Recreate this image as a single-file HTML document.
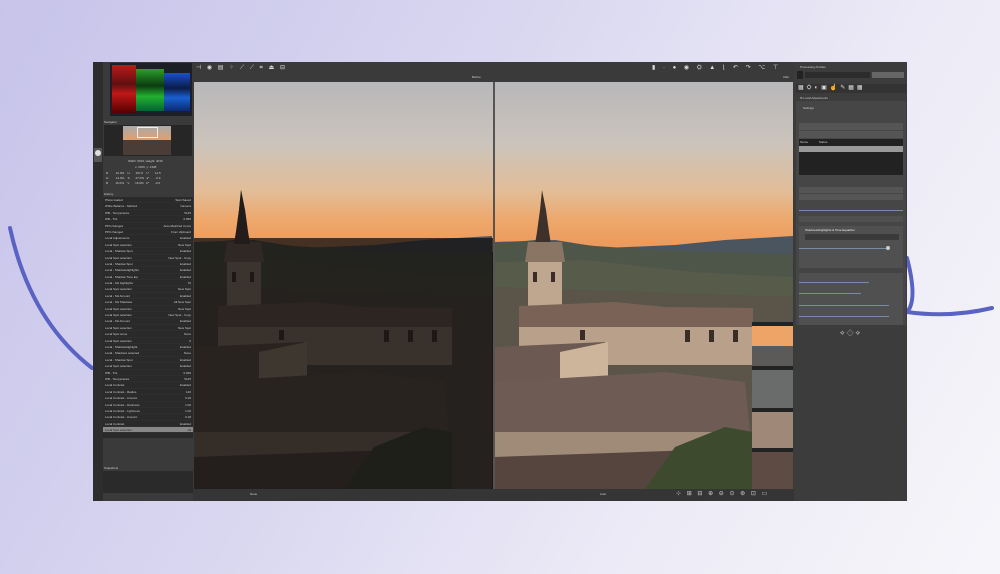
<!DOCTYPE html>
<html><head><meta charset="utf-8"><style>
*{margin:0;padding:0;box-sizing:border-box}
body{width:1000px;height:574px;overflow:hidden;position:relative;font-family:"Liberation Sans",sans-serif;
background:linear-gradient(120deg,#c7c3ea 0%,#d9d7f0 40%,#eceaf6 70%,#f6f6fa 100%)}
.abs{position:absolute}
.win{left:93px;top:62px;width:814px;height:439px;background:#3a3a3a}
.t{font-size:3px;color:#cfcfcf;white-space:nowrap}
.row{height:6.4px;border-bottom:1px solid #2e2e2e;display:flex;justify-content:space-between;padding:0 2px;font-size:3px;color:#ccc;line-height:6px}
.sky{position:absolute;left:0;top:0;width:100%;height:170px;background:linear-gradient(#b8b7ba 0%,#cbc4bc 36%,#e2bd98 64%,#eea76a 82%,#ec965a 100%)}
</style></head><body>
<svg class="abs" style="left:0;top:0" width="1000" height="574">
<path d="M10 228 Q30 320 92 368" stroke="#5a62c4" stroke-width="4" fill="none" stroke-linecap="round"/>
<path d="M907 258 Q918 300 907 312 Q950 318 992 308" stroke="#5a62c4" stroke-width="4" fill="none" stroke-linecap="round"/>
</svg>
<div class="abs win"></div>
<div class="abs" style="left:93px;top:62px;width:10px;height:439px;background:#2d2d2d"></div>
<div class="abs" style="left:94px;top:148px;width:8px;height:14px;background:#555"></div>
<div class="abs" style="left:95px;top:150px;width:6px;height:6px;border-radius:50%;background:#ddd"></div>
<div class="abs" style="left:110px;top:63px;width:82px;height:53px;background:#1d1f26;overflow:hidden">
<div class="abs" style="left:2px;top:2px;width:24px;height:48px;background:linear-gradient(#c0181a,#601010 40%,#c01818 60%,#500)"></div>
<div class="abs" style="left:26px;top:6px;width:28px;height:42px;background:linear-gradient(#2aa02a,#0c3a10 40%,#22b030 65%,#063)"></div>
<div class="abs" style="left:54px;top:10px;width:26px;height:38px;background:linear-gradient(#1a50c8,#0a1c48 40%,#1a60d0 65%,#0a2a70)"></div>
</div>
<div class="abs t" style="left:104px;top:120px">Navigator</div>
<div class="abs" style="left:104px;top:125px;width:88px;height:31px;background:#262626"></div>
<div class="abs" style="left:123px;top:126px;width:48px;height:14px;background:linear-gradient(#aaa,#e0a070)"></div>
<div class="abs" style="left:123px;top:140px;width:48px;height:15px;background:#4a3c36"></div>
<div class="abs" style="left:137px;top:127px;width:21px;height:11px;border:1px solid #eee"></div>
<div class="abs t" style="left:128px;top:159px">Width: 6016, Height: 4016</div>
<div class="abs t" style="left:135px;top:165px">x: 3015, y: 1338</div>
<div class="abs t" style="left:106px;top:171px;line-height:5px">R &nbsp;&nbsp;&nbsp;&nbsp;&nbsp;&nbsp;&nbsp;&nbsp;10.0% &nbsp;&nbsp;&nbsp;H &nbsp;&nbsp;&nbsp;&nbsp;&nbsp;&nbsp;167.6 &nbsp;&nbsp;&nbsp;L* &nbsp;&nbsp;&nbsp;&nbsp;&nbsp;&nbsp;11.5<br>G &nbsp;&nbsp;&nbsp;&nbsp;&nbsp;&nbsp;&nbsp;&nbsp;14.0% &nbsp;&nbsp;&nbsp;S &nbsp;&nbsp;&nbsp;&nbsp;&nbsp;&nbsp;27.0% &nbsp;&nbsp;a* &nbsp;&nbsp;&nbsp;&nbsp;&nbsp;&nbsp;-0.9<br>B &nbsp;&nbsp;&nbsp;&nbsp;&nbsp;&nbsp;&nbsp;&nbsp;16.0% &nbsp;&nbsp;&nbsp;V &nbsp;&nbsp;&nbsp;&nbsp;&nbsp;&nbsp;16.0% &nbsp;&nbsp;b* &nbsp;&nbsp;&nbsp;&nbsp;&nbsp;&nbsp;-3.6</div>
<div class="abs t" style="left:104px;top:192px">History</div>
<div class="abs" style="left:103px;top:197px;width:90px;height:241px;background:#2a2a2a">
<div class="row"><span>Photo loaded</span><span>Start Saved</span></div>
<div class="row"><span>White Balance - Method</span><span>Camera</span></div>
<div class="row"><span>WB - Temperature</span><span>5145</span></div>
<div class="row"><span>WB - Tint</span><span>0.950</span></div>
<div class="row"><span>PP3 changed</span><span>Auto-Matched Curve</span></div>
<div class="row"><span>PP3 changed</span><span>From clipboard</span></div>
<div class="row"><span>Local Adjustments</span><span>Enabled</span></div>
<div class="row"><span>Local Spot selection</span><span>New Spot</span></div>
<div class="row"><span>Local - Shadow Spot</span><span>Enabled</span></div>
<div class="row"><span>Local Spot selection</span><span>New Spot - Copy</span></div>
<div class="row"><span>Local - Shadow Spot</span><span>Enabled</span></div>
<div class="row"><span>Local - ShadowHighlights</span><span>Enabled</span></div>
<div class="row"><span>Local - Shadow Tone Eq.</span><span>Enabled</span></div>
<div class="row"><span>Local - SH Highlights</span><span>70</span></div>
<div class="row"><span>Local Spot selection</span><span>New Spot</span></div>
<div class="row"><span>Local - SH Amount</span><span>Enabled</span></div>
<div class="row"><span>Local - SH Shadows</span><span>All New Spot</span></div>
<div class="row"><span>Local Spot selection</span><span>New Spot</span></div>
<div class="row"><span>Local Spot selection</span><span>New Spot - Copy</span></div>
<div class="row"><span>Local - SH Amount</span><span>Enabled</span></div>
<div class="row"><span>Local Spot selection</span><span>New Spot</span></div>
<div class="row"><span>Local Spot curve</span><span>None</span></div>
<div class="row"><span>Local Spot selection</span><span>0</span></div>
<div class="row"><span>Local - ShadowHighlight</span><span>Enabled</span></div>
<div class="row"><span>Local - Shadows selected</span><span>None</span></div>
<div class="row"><span>Local - Shadow Spot</span><span>Enabled</span></div>
<div class="row"><span>Local Spot selection</span><span>Enabled</span></div>
<div class="row"><span>WB - Tint</span><span>0.930</span></div>
<div class="row"><span>WB - Temperature</span><span>5145</span></div>
<div class="row"><span>Local Contrast</span><span>Enabled</span></div>
<div class="row"><span>Local Contrast - Radius</span><span>120</span></div>
<div class="row"><span>Local Contrast - Amount</span><span>0.20</span></div>
<div class="row"><span>Local Contrast - Darkness</span><span>1.00</span></div>
<div class="row"><span>Local Contrast - Lightness</span><span>1.00</span></div>
<div class="row"><span>Local Contrast - Amount</span><span>0.18</span></div>
<div class="row"><span>Local Contrast</span><span>Enabled</span></div>
<div class="row" style="background:#888;color:#222"><span>Local Spot selection</span><span>All</span></div>
</div>
<div class="abs t" style="left:104px;top:466px">Snapshots</div>
<div class="abs" style="left:103px;top:471px;width:90px;height:22px;background:#2a2a2a"></div>
<div class="abs" style="left:193px;top:62px;width:601px;height:20px;background:#3a3a3a"></div>
<div class="abs t" style="left:196px;top:64px;font-size:6px;color:#ddd;letter-spacing:2px">⊣ ◉ ▤ ⁘ ⟋ ⟋ ⌗ ⏏ ⊟</div>
<div class="abs t" style="left:652px;top:64px;font-size:6px;color:#ddd;letter-spacing:3px">▮ · ● ◉ ⛭ ▲ ⌊ ↶ ↷ ⌥ ⊤</div>
<div class="abs t" style="left:472px;top:75px">Before</div>
<div class="abs t" style="left:783px;top:75px">After</div>

<svg width="0" height="0" style="position:absolute">
<defs>
<g id="town">
<path d="M0 160 L60 158 L110 166 L180 163 L230 158 L298 154 L298 407 L0 407Z" fill="#4a5560"/>
<path d="M0 162 L40 158 L100 164 L160 168 L298 172 L298 407 L0 407Z" fill="#4d5649"/>
<path d="M0 180 L90 178 L200 190 L298 195 L298 407 L0 407Z" fill="#565b4a"/>
<path d="M0 205 L298 215 L298 407 L0 407Z" fill="#5b5448"/>
<path d="M47 108 L45 128 L42 150 L40 162 L56 162 L54 150 L51 128Z" fill="#3e302b"/>
<path d="M33 160 L67 160 L70 180 L30 180Z" fill="#8a7464"/>
<rect x="33" y="180" width="34" height="50" fill="#bfa68e"/>
<rect x="38" y="190" width="4" height="10" fill="#3a2c26"/><rect x="56" y="190" width="4" height="10" fill="#3a2c26"/>
<path d="M24 224 L120 220 L170 225 L258 226 L258 245 L24 247Z" fill="#7a6356"/>
<rect x="24" y="245" width="234" height="38" fill="#b8a08a"/>
<rect x="85" y="248" width="5" height="10" fill="#3a2c26"/><rect x="190" y="248" width="5" height="12" fill="#3a2c26"/><rect x="214" y="248" width="5" height="12" fill="#3a2c26"/><rect x="238" y="248" width="5" height="12" fill="#3a2c26"/>
<path d="M0 265 L110 260 L113 298 L0 300Z" fill="#6c5a52"/>
<path d="M65 270 L113 260 L113 298 L65 300Z" fill="#cdb59c"/>
<path d="M0 300 L170 290 L250 300 L255 350 L0 360Z" fill="#6e5c54"/>
<rect x="0" y="350" width="250" height="28" fill="#a08a78"/>
<path d="M0 375 L200 368 L258 378 L258 407 L0 407Z" fill="#56453f"/>
<path d="M150 407 L180 365 L230 345 L258 350 L258 407Z" fill="#3e4a2e"/>
</g>
</defs>
</svg>

<div class="abs" style="left:194px;top:82px;width:299px;height:407px;overflow:hidden;background:#2a2624">
<div class="sky"></div>
<svg class="abs" style="left:0;top:0" width="299" height="407"><use href="#town"/></svg>
<div class="abs" style="left:0;top:156px;width:299px;height:251px;background:rgba(22,19,18,0.78)"></div>
<svg class="abs" style="left:0;top:0" width="299" height="170"><path d="M47 108 L45 128 L42 150 L40 162 L56 162 L54 150 L51 128Z" fill="#221c1a"/></svg>
</div>
<div class="abs" style="left:493px;top:82px;width:2px;height:407px;background:#555"></div>
<div class="abs" style="left:495px;top:82px;width:298px;height:407px;overflow:hidden;background:#5b5448">
<div class="sky"></div>
<svg class="abs" style="left:0;top:0" width="298" height="407"><use href="#town"/></svg>
<div class="abs" style="left:257px;top:240px;width:41px;height:167px;background:#6a5a50"></div>
<div class="abs" style="left:257px;top:240px;width:41px;height:4px;background:#222"></div>
<div class="abs" style="left:257px;top:244px;width:41px;height:20px;background:#eea466"></div>
<div class="abs" style="left:257px;top:264px;width:41px;height:20px;background:#5b5a58"></div>
<div class="abs" style="left:257px;top:284px;width:41px;height:4px;background:#222"></div>
<div class="abs" style="left:257px;top:288px;width:41px;height:38px;background:#6a6c6c"></div>
<div class="abs" style="left:257px;top:326px;width:41px;height:4px;background:#222"></div>
<div class="abs" style="left:257px;top:330px;width:41px;height:36px;background:#a08878"></div>
<div class="abs" style="left:257px;top:366px;width:41px;height:4px;background:#222"></div>
<div class="abs" style="left:257px;top:370px;width:41px;height:37px;background:#5e4c44"></div>
</div>
<div class="abs" style="left:193px;top:489px;width:601px;height:12px;background:#353535"></div>
<div class="abs t" style="left:250px;top:492px">None</div>
<div class="abs t" style="left:600px;top:492px">Auto</div>
<div class="abs t" style="left:676px;top:490px;font-size:6px;letter-spacing:2px;color:#ccc">⊹ ⊞ ⊟ ⊕ ⊖ ⊙ ⊛ ⊡ ▭</div>
<div class="abs" style="left:794px;top:62px;width:113px;height:439px;background:#3c3c3c"></div>
<div class="abs t" style="left:800px;top:65px">Processing Profiles</div>
<div class="abs" style="left:797px;top:71px;width:6px;height:8px;background:#222"></div>
<div class="abs" style="left:805px;top:72px;width:65px;height:6px;background:#2c2c2c"></div>
<div class="abs" style="left:872px;top:72px;width:32px;height:6px;background:#666"></div>
<div class="abs" style="left:796px;top:84px;width:110px;height:9px;background:#333"></div>
<div class="abs t" style="left:798px;top:84px;font-size:6px;letter-spacing:3px;color:#ddd">▦⛭◐▣☝✎▦▦</div>
<div class="abs t" style="left:800px;top:96px">⚙ Local Adjustments</div>
<div class="abs" style="left:796px;top:101px;width:110px;height:224px;background:#464646"></div>
<div class="abs t" style="left:803px;top:106px">Settings</div>
<div class="abs" style="left:799px;top:123px;width:104px;height:7px;background:#555"></div>
<div class="abs" style="left:799px;top:131px;width:104px;height:7px;background:#555"></div>
<div class="abs" style="left:799px;top:139px;width:104px;height:36px;background:#222"></div>
<div class="abs" style="left:799px;top:146px;width:104px;height:6px;background:#999"></div>
<div class="abs t" style="left:800px;top:140px">Name &nbsp;&nbsp;&nbsp;&nbsp;&nbsp;&nbsp;&nbsp;&nbsp;&nbsp;&nbsp;&nbsp;&nbsp;Status</div>
<div class="abs" style="left:799px;top:187px;width:104px;height:6px;background:#555"></div>
<div class="abs" style="left:799px;top:194px;width:104px;height:6px;background:#555"></div>
<div class="abs" style="left:799px;top:210px;width:104px;height:1px;background:#7a8aaa"></div>
<div class="abs" style="left:799px;top:216px;width:104px;height:6px;background:#505050"></div>
<div class="abs" style="left:799px;top:226px;width:104px;height:99px;background:#505050"></div>
<div class="abs t" style="left:805px;top:228px;color:#eee">Shadows/Highlights &amp; Tone Equalizer</div>
<div class="abs" style="left:805px;top:234px;width:94px;height:6px;background:#3a3a3a"></div>
<div class="abs" style="left:799px;top:248px;width:90px;height:1px;background:#7a8aaa"></div>
<div class="abs" style="left:886px;top:246px;width:4px;height:4px;border-radius:50%;background:#ccc"></div>
<div class="abs" style="left:799px;top:268px;width:104px;height:5px;background:#444"></div>
<div class="abs" style="left:799px;top:282px;width:70px;height:1px;background:#7a8aaa"></div>
<div class="abs" style="left:799px;top:293px;width:62px;height:1px;background:#7a8aaa"></div>
<div class="abs" style="left:799px;top:305px;width:90px;height:1px;background:#7a8aaa"></div>
<div class="abs" style="left:799px;top:316px;width:90px;height:1px;background:#7a8aaa"></div>
<div class="abs t" style="left:840px;top:330px;font-size:7px;color:#ccc">⟡ ⟐ ⟡</div>
</body></html>
